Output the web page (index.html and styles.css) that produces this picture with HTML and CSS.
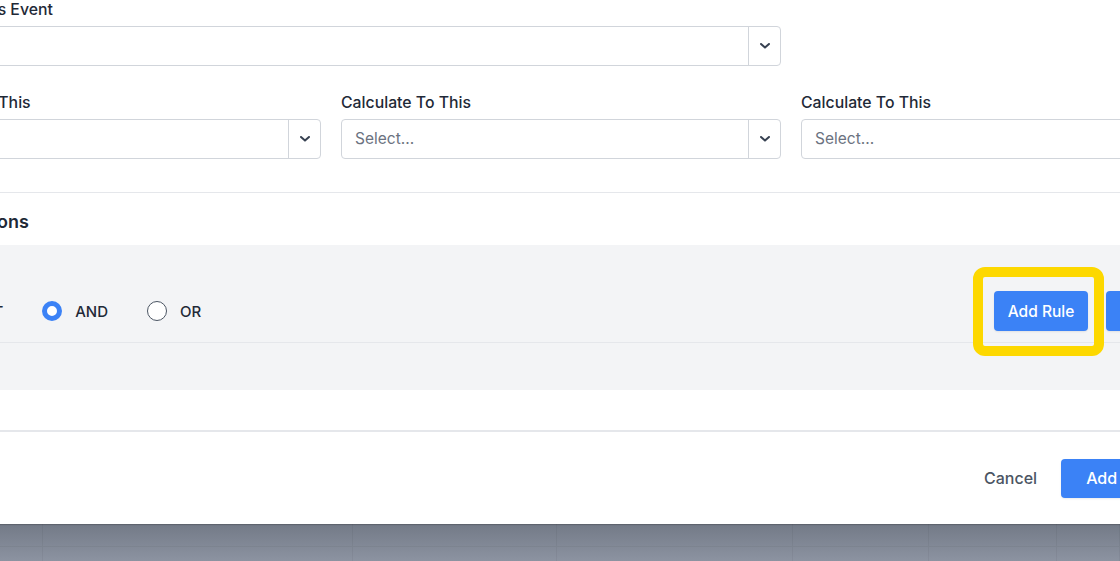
FILE: index.html
```html
<!DOCTYPE html>
<html lang="en">
<head>
<meta charset="utf-8">
<title>Add Calculation</title>
<link rel="stylesheet" href="styles.css">
</head>
<body>
<div class="page">
  <div class="modal">
    <div class="modal-body">
      <div class="fields">
        <div class="field span-2">
          <label class="label">Calculate In This Event</label>
          <div class="select">
            <span class="value"></span>
            <span class="indicator"><svg width="10" height="6" viewBox="0 0 10 6"><path d="M1 1l4 3.6L9 1" fill="none" stroke="#374151" stroke-width="2" stroke-linecap="round" stroke-linejoin="round"/></svg></span>
          </div>
        </div>
        <div class="field empty"></div>
        <div class="field">
          <label class="label">Calculate From This</label>
          <div class="select">
            <span class="value"></span>
            <span class="indicator"><svg width="10" height="6" viewBox="0 0 10 6"><path d="M1 1l4 3.6L9 1" fill="none" stroke="#374151" stroke-width="2" stroke-linecap="round" stroke-linejoin="round"/></svg></span>
          </div>
        </div>
        <div class="field">
          <label class="label">Calculate To This</label>
          <div class="select">
            <span class="value">Select...</span>
            <span class="indicator"><svg width="10" height="6" viewBox="0 0 10 6"><path d="M1 1l4 3.6L9 1" fill="none" stroke="#374151" stroke-width="2" stroke-linecap="round" stroke-linejoin="round"/></svg></span>
          </div>
        </div>
        <div class="field">
          <label class="label">Calculate To This</label>
          <div class="select">
            <span class="value">Select...</span>
            <span class="indicator"><svg width="10" height="6" viewBox="0 0 10 6"><path d="M1 1l4 3.6L9 1" fill="none" stroke="#374151" stroke-width="2" stroke-linecap="round" stroke-linejoin="round"/></svg></span>
          </div>
        </div>
      </div>

      <hr class="sep">

      <h3 class="heading">Event Conditions</h3>

      <div class="rules-box">
        <div class="rule-row">
          <div class="combinators">
            <label class="radio-opt"><span class="radio"></span><span class="radio-label">NOT</span></label>
            <label class="radio-opt"><span class="radio checked"></span><span class="radio-label">AND</span></label>
            <label class="radio-opt"><span class="radio"></span><span class="radio-label">OR</span></label>
          </div>
          <div class="actions">
            <button class="btn highlight">Add Rule</button>
            <button class="btn">Add Group</button>
          </div>
        </div>
      </div>
    </div>

    <div class="modal-footer">
      <button class="btn-link">Cancel</button>
      <button class="btn btn-lg">Add Calculation</button>
    </div>
  </div>

  <div class="backdrop">
    <div class="cell top"></div><div class="cell top"></div><div class="cell top"></div><div class="cell top"></div><div class="cell top"></div><div class="cell top"></div><div class="cell top"></div>
    <div class="cell"></div><div class="cell"></div><div class="cell"></div><div class="cell"></div><div class="cell"></div><div class="cell"></div><div class="cell"></div>
  </div>
</div>
</body>
</html>
```

FILE: styles.css
```css
* { box-sizing: border-box; }

html, body {
  margin: 0;
  padding: 0;
}

body {
  width: 1120px;
  height: 561px;
  overflow: hidden;
  font-family: Inter, "Noto Sans", "Liberation Sans", sans-serif;
  color: #1f2937;
  background: #8a909e;
}

.page {
  display: flex;
  flex-direction: column;
  height: 561px;
}

.modal {
  flex: 0 0 524px;
  width: 1400px;
  margin-left: -139px;
  background: #ffffff;
  display: flex;
  flex-direction: column;
  position: relative;
  z-index: 1;
  box-shadow: 0 1px 1px rgba(0, 0, 0, 0.18);
}

.modal-body {
  padding: 0 20px 40px;
}

.fields {
  display: grid;
  grid-template-columns: repeat(3, 440px);
  column-gap: 20px;
  row-gap: 27px;
}

.span-2 { grid-column: span 2; }

.label {
  display: block;
  font-size: 15.8px;
  font-weight: 500;
  line-height: 20px;
  color: #1f2937;
  margin-bottom: 6px;
}

.select {
  height: 40px;
  border: 1px solid #d1d5db;
  border-radius: 4px;
  display: flex;
  align-items: stretch;
  background: #fff;
}

.select .value {
  flex: 1;
  padding: 0 13px;
  line-height: 38px;
  font-size: 15.5px;
  color: #6b7280;
}

.select .indicator {
  width: 32px;
  border-left: 1px solid #d1d5db;
  display: flex;
  align-items: center;
  justify-content: center;
}

.sep {
  border: 0;
  border-top: 1px solid #e5e7eb;
  margin: 33px -20px 0;
  height: 0;
}

.heading {
  margin: 17px 0 11px;
  font-size: 18px;
  line-height: 24px;
  font-weight: 600;
  color: #1f2937;
}

.rules-box {
  background: #f3f4f6;
  border-radius: 4px;
  padding: 46px 27px 47px 57px;
}

.rule-row {
  display: flex;
  align-items: center;
  padding-bottom: 11px;
  border-bottom: 1px solid #e5e7eb;
}

.combinators {
  display: flex;
  align-items: center;
  gap: 39px;
}

.radio-opt {
  display: flex;
  align-items: center;
  gap: 13px;
  font-size: 15px;
  font-weight: 500;
  color: #1f2937;
}

.radio {
  width: 20px;
  height: 20px;
  border-radius: 50%;
  border: 1px solid #4b5563;
  background: #fff;
}

.radio.checked {
  border: 5.5px solid #3b82f6;
}

.actions {
  margin-left: auto;
  display: flex;
  gap: 18px;
}

.btn {
  height: 40px;
  padding: 0 14px;
  border: 0;
  border-radius: 4px;
  background: #3b82f6;
  color: #ffffff;
  font-family: inherit;
  font-size: 15.5px;
  font-weight: 500;
  box-shadow: 0 1px 2px rgba(0, 0, 0, 0.08);
}

.highlight {
  position: relative;
}

.highlight::after {
  content: "";
  position: absolute;
  left: -21px;
  right: -16px;
  top: -24px;
  bottom: -25px;
  border: 10px solid #fdd800;
  border-radius: 12px;
}

.modal-footer {
  flex: 1;
  border-top: 2px solid #e5e7eb;
  display: flex;
  align-items: center;
  justify-content: flex-end;
  gap: 12px;
  padding-right: 29px;
}

.btn-link {
  background: none;
  border: 0;
  padding: 0 12px;
  height: 40px;
  font-family: inherit;
  font-size: 16px;
  font-weight: 500;
  color: #4b5563;
}

.btn-lg {
  height: 39px;
  padding: 0 25px;
  font-size: 16px;
}

.backdrop {
  flex: 1;
  background: linear-gradient(#737a87, #8c93a1);
  display: grid;
  grid-template-columns: 43px 310px 204px 236px 136px 128px 1fr;
  grid-template-rows: 23px 1fr;
}

.cell {
  border-right: 1px solid rgba(0, 0, 0, 0.045);
}

.cell.top {
  border-bottom: 1px solid rgba(0, 0, 0, 0.045);
}
```
